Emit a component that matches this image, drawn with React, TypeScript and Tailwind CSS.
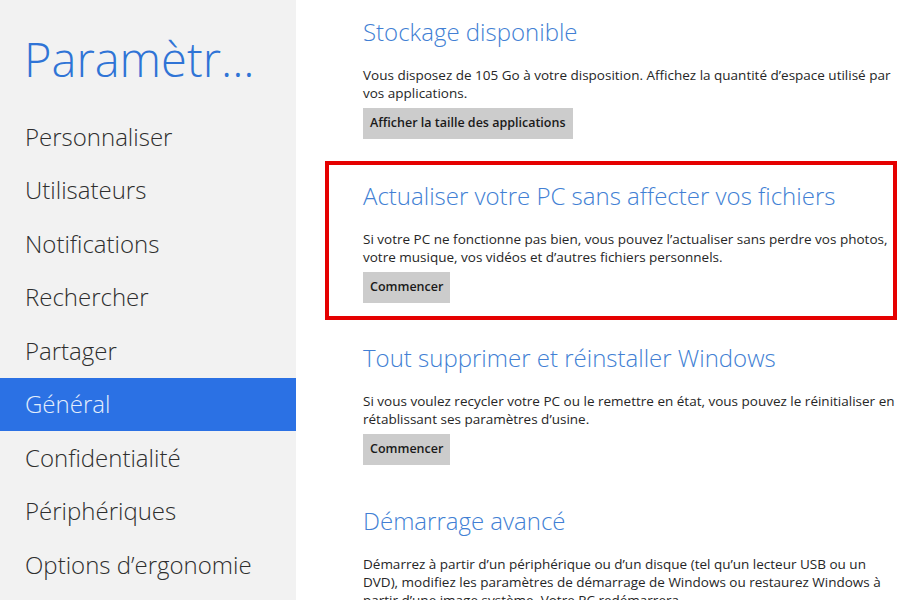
import React from "react";

const items = [
  "Personnaliser",
  "Utilisateurs",
  "Notifications",
  "Rechercher",
  "Partager",
  "Général",
  "Confidentialité",
  "Périphériques",
  "Options d’ergonomie",
];

function Section({
  title,
  text,
  button,
  className = "",
}: {
  title: string;
  text: string;
  button?: string;
  className?: string;
}) {
  return (
    <div className={className}>
      <h2 className="text-[24px] leading-[32px] font-light text-[#427fd4]">{title}</h2>
      <p className="mt-[18px] text-[13.5px] leading-[18px] text-[#262626]">{text}</p>
      {button && (
        <button className="mt-[6px] h-[31px] px-[7px] bg-[#cccccc] text-[12.5px] font-semibold text-[#1a1a1a]">
          {button}
        </button>
      )}
    </div>
  );
}

export default function App() {
  return (
    <div
      className="w-[900px] h-[600px] overflow-hidden flex bg-white"
      style={{ fontFamily: "'Open Sans', 'Noto Sans', sans-serif" }}
    >
      {/* Left navigation */}
      <div className="w-[296px] shrink-0 bg-[#f2f2f2] flex flex-col">
        <h1 className="pt-[31px] h-[110px] px-[24px] text-[47px] leading-[56px] font-light text-[#2f74d6]">
          Paramètr...
        </h1>
        {items.map((item) => (
          <div
            key={item}
            className={
              item === "Général"
                ? "h-[53.5px] shrink-0 flex items-center px-[25px] text-[24px] font-light bg-[#2b71e4] text-[#e3eefc]"
                : "h-[53.5px] shrink-0 flex items-center px-[25px] text-[24px] font-light text-[#2e2e2e]"
            }
          >
            {item}
          </div>
        ))}
      </div>

      {/* Settings content */}
      <div className="pl-[29px] w-[604px] flex flex-col">
        <Section
          className="pt-[16px] pl-[38px]"
          title="Stockage disponible"
          text="Vous disposez de 105 Go à votre disposition. Affichez la quantité d’espace utilisé par vos applications."
          button="Afficher la taille des applications"
        />
        <Section
          className="mt-[22px] w-[572px] border-4 border-[#e50000] pt-[15px] pb-[13px] pl-[34px]"
          title="Actualiser votre PC sans affecter vos fichiers"
          text="Si votre PC ne fonctionne pas bien, vous pouvez l’actualiser sans perdre vos photos, votre musique, vos vidéos et d’autres fichiers personnels."
          button="Commencer"
        />
        <Section
          className="mt-[22px] pl-[38px]"
          title="Tout supprimer et réinstaller Windows"
          text="Si vous voulez recycler votre PC ou le remettre en état, vous pouvez le réinitialiser en rétablissant ses paramètres d’usine."
          button="Commencer"
        />
        <Section
          className="mt-[40px] pl-[38px] pr-[8px]"
          title="Démarrage avancé"
          text="Démarrez à partir d’un périphérique ou d’un disque (tel qu’un lecteur USB ou un DVD), modifiez les paramètres de démarrage de Windows ou restaurez Windows à partir d’une image système. Votre PC redémarrera."
        />
      </div>
    </div>
  );
}
